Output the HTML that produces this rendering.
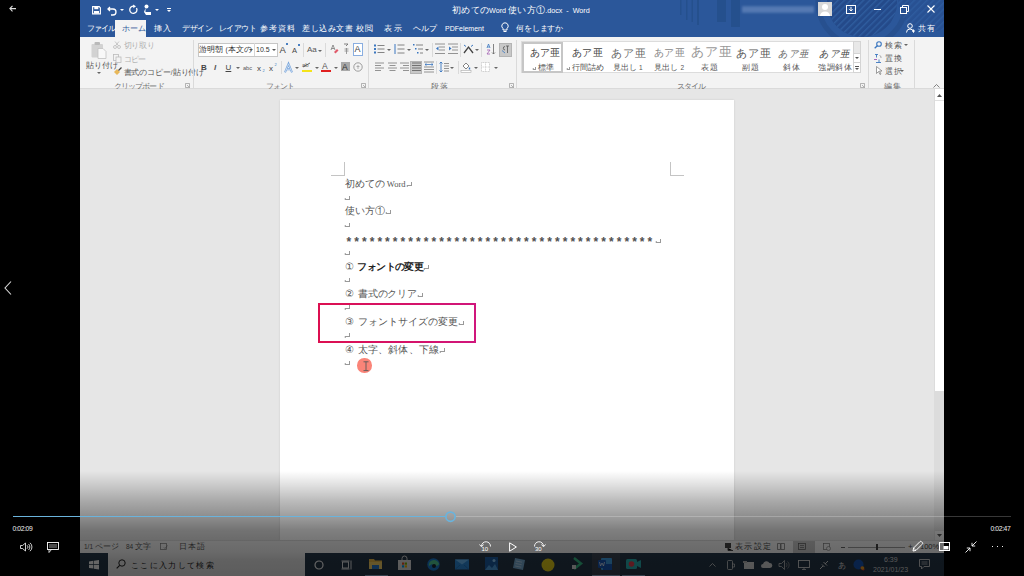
<!DOCTYPE html>
<html><head><meta charset="utf-8">
<style>
*{margin:0;padding:0;box-sizing:border-box}
html,body{width:1024px;height:576px;overflow:hidden;background:#000}
body{position:relative;font-family:"Liberation Sans",sans-serif;color:#444}
.a{position:absolute}
.t{position:absolute;white-space:nowrap;line-height:1}
.j{font-family:"Liberation Sans",sans-serif;font-style:normal;font-size:1.2em;letter-spacing:.03em}
.dd{position:absolute;width:0;height:0;border-left:2px solid transparent;border-right:2px solid transparent;border-top:2px solid #666}
.ddw{border-top-color:#fff}
svg{position:absolute;overflow:visible}
#title{left:80px;top:0;width:864px;height:37px;background:#2b579a;overflow:hidden}
#tabs{left:80px;top:20px;width:864px;height:17px;background:#2b579a}
#ribbon{left:80px;top:37px;width:864px;height:52px;background:#f3f3f3;border-bottom:1px solid #dadada}
#docbg{left:80px;top:89px;width:854px;height:451px;background:#e6e6e6}
#page{left:280px;top:100px;width:454px;height:440px;background:#fff;box-shadow:0 0 2px rgba(0,0,0,.12)}
#vscroll{left:934px;top:89px;width:10px;height:451px;background:#fff}
#status{left:80px;top:540px;width:864px;height:13px;background:#f3f3f3;border-top:1px solid #dcdcdc}
#taskbar{left:80px;top:553px;width:864px;height:23px;background:#26384a}
#overlay{left:0;top:466px;width:1024px;height:110px;background:linear-gradient(to bottom,rgba(0,0,0,0) 0%,rgba(0,0,0,0.00) 4.5%,rgba(0,0,0,0.12) 17.3%,rgba(0,0,0,0.26) 30.9%,rgba(0,0,0,0.39) 46.4%,rgba(0,0,0,0.50) 58.2%,rgba(0,0,0,0.54) 68.2%,rgba(0,0,0,0.57) 79.1%,rgba(0,0,0,0.60) 85.5%,rgba(0,0,0,0.62) 100.0%)}
.w{color:#fff}
.tb{font-size:6.8px;color:#fff}
.rb{font-size:6.5px;color:#555}
.dis{color:#b0b0b0}
.gl{font-size:6.5px;color:#707070}
.sb{font-size:6.5px;color:#555}
.sep{position:absolute;width:1px;background:#dadada}
.doc{font-family:"Liberation Serif",serif;font-size:8px;color:#555}
.rt{position:absolute;display:inline-block;width:5px;height:4px;border-right:.8px solid #999;border-bottom:.8px solid #999}
.rt::before{content:"";position:absolute;left:-1px;bottom:-1.6px;border-right:2px solid #999;border-top:1.2px solid transparent;border-bottom:1.2px solid transparent}
.doc .rt{position:relative;margin-left:1px;top:-.5px}
.ast{font-family:"Liberation Sans",sans-serif;letter-spacing:3.05px;font-size:12px;font-weight:bold;color:#505050}
#wrap{position:absolute;left:0;top:0;width:1024px;height:576px}
</style></head><body><div id="wrap">
<!-- ===== TITLE BAR ===== -->
<div id="title" class="a">
  <svg width="864" height="37" style="left:0;top:0" viewBox="0 0 864 37">
    <defs><clipPath id="c1"><circle cx="782" cy="2" r="35"/></clipPath><clipPath id="c2"><circle cx="850" cy="0" r="32"/></clipPath><pattern id="hp" width="4.5" height="4.5" patternUnits="userSpaceOnUse" patternTransform="rotate(45)"><rect width="4.5" height="4.5" fill="#24498a"/><rect width="1.4" height="4.5" fill="#3161a4"/></pattern></defs>
    <circle cx="782" cy="2" r="44" fill="none" stroke="#27508f" stroke-width="5"/>
    <circle cx="782" cy="2" r="35" fill="#244c89"/>
    <rect x="730" y="-40" width="120" height="80" fill="url(#hp)" clip-path="url(#c1)" opacity=".8"/>
    <rect x="815" y="-40" width="80" height="80" fill="url(#hp)" clip-path="url(#c2)" opacity=".45"/>
    <g fill="#25508d"><rect x="600" y="0" width="1.5" height="15"/><rect x="606" y="0" width="1.5" height="20"/><rect x="611.5" y="0" width="1.5" height="22"/><rect x="617" y="0" width="2" height="25"/><rect x="637" y="0" width="9" height="22"/><rect x="651" y="0" width="9" height="27"/></g>
  </svg>
</div>

<!-- QAT icons -->
<svg style="left:91.5px;top:5.5px" width="9" height="8.5" viewBox="0 0 9 8.5"><path d="M.6.6h6.6l1.2 1.2v6.1H.6z" fill="none" stroke="#fff" stroke-width="1.1"/><rect x="2.3" y="1" width="4" height="2.2" fill="#fff"/><rect x="2" y="5" width="5" height="2.6" fill="#fff"/></svg>
<svg style="left:107px;top:5px" width="11" height="10" viewBox="0 0 11 10"><path d="M3 2L1 4l2 2M1 4h5a3 3 0 0 1 0 6H4" fill="none" stroke="#fff" stroke-width="1.3"/></svg>
<div class="dd ddw" style="left:119.5px;top:9px"></div>
<svg style="left:128px;top:4px" width="10" height="11" viewBox="0 0 10 11"><path d="M6 2.2A3.6 3.6 0 1 0 8.5 4" fill="none" stroke="#fff" stroke-width="1.3"/><path d="M5 0.5l3 1.7-2.6 2z" fill="#fff"/></svg>
<svg style="left:143px;top:4px" width="9" height="11" viewBox="0 0 9 11"><circle cx="3.5" cy="2.5" r="2" fill="#fff"/><path d="M2.5 4v4h5.5v3H3L1 8" fill="#fff"/></svg>
<div class="dd ddw" style="left:155px;top:9px"></div>
<div class="a" style="left:166.5px;top:8px;width:4px;height:1px;background:#fff"></div><div class="dd ddw" style="left:166.5px;top:10px"></div>
<div class="t tb" style="left:452px;top:6px;font-size:7.2px"><span class="j">初めての</span>Word <span class="j">使い方①</span>.docx &nbsp;- &nbsp;Word</div>
<!-- blurred user -->
<div class="a" style="left:742px;top:6px;width:72px;height:7px;background:linear-gradient(to bottom,#5d80b8,#7191c4,#5d80b8);opacity:.65;filter:blur(1px)"></div>
<div class="a" style="left:818px;top:2px;width:14px;height:14px;background:#d8d8d8"></div>
<svg style="left:818px;top:2px" width="14" height="14" viewBox="0 0 14 14"><circle cx="7" cy="5" r="3" fill="#fff"/><path d="M2 14a5 4.5 0 0 1 10 0z" fill="#fff"/></svg>
<svg style="left:846px;top:5px" width="10" height="9" viewBox="0 0 10 9"><rect x=".5" y=".5" width="9" height="8" fill="none" stroke="#fff"/><path d="M5 2v4M3.3 4.2L5 6l1.7-1.8" fill="none" stroke="#fff"/></svg>
<div class="a" style="left:874px;top:9px;width:7px;height:1px;background:#fff"></div>
<svg style="left:900px;top:5px" width="9" height="9" viewBox="0 0 9 9"><rect x=".5" y="2.5" width="6" height="6" fill="none" stroke="#fff"/><path d="M2.5 2.5V.5h6v6h-2" fill="none" stroke="#fff"/></svg>
<svg style="left:927px;top:5px" width="8" height="8" viewBox="0 0 8 8"><path d="M.5.5l7 7M7.5.5l-7 7" stroke="#fff" stroke-width="1.1"/></svg>
<!-- tabs -->
<div class="a" style="left:115px;top:20px;width:31px;height:17px;background:#f3f3f3"></div>
<div class="t tb" style="left:87px;top:25px"><span class="j" style="letter-spacing:calc(.03em + -1.25px)">ファイル</span></div>
<div class="t" style="left:121.5px;top:25px;font-size:6.8px;color:#2b579a"><span class="j">ホーム</span></div>
<div class="t tb" style="left:154px;top:25px"><span class="j" style="letter-spacing:calc(.03em + 0.95px)">挿入</span></div>
<div class="t tb" style="left:182px;top:25px"><span class="j" style="letter-spacing:calc(.03em + -0.50px)">デザイン</span></div>
<div class="t tb" style="left:219px;top:25px"><span class="j" style="letter-spacing:calc(.03em + -0.84px)">レイアウト</span></div>
<div class="t tb" style="left:260px;top:25px"><span class="j" style="letter-spacing:calc(.03em + 0.75px)">参考資料</span></div>
<div class="t tb" style="left:302px;top:25px"><span class="j" style="letter-spacing:calc(.03em + 0.30px)">差し込み文書</span></div>
<div class="t tb" style="left:355.5px;top:25px"><span class="j" style="letter-spacing:calc(.03em + 1.40px)">校閲</span></div>
<div class="t tb" style="left:384px;top:25px"><span class="j" style="letter-spacing:calc(.03em + 1.50px)">表示</span></div>
<div class="t tb" style="left:413px;top:25px"><span class="j" style="letter-spacing:calc(.03em + -0.20px)">ヘルプ</span></div>
<div class="t tb" style="left:445px;top:24.5px;font-size:7px">PDFelement</div>
<svg style="left:501px;top:22px" width="8" height="11" viewBox="0 0 8 11"><path d="M4 .8a3.2 3.2 0 0 0-2 5.7V8h4V6.5A3.2 3.2 0 0 0 4 .8z" fill="none" stroke="#fff" stroke-width="1"/><path d="M2.5 9.5h3" stroke="#fff"/></svg>
<div class="t tb" style="left:516px;top:25px"><span class="j" style="letter-spacing:calc(.03em + -0.40px)">何をしますか</span></div>
<svg style="left:906px;top:23px" width="9" height="10" viewBox="0 0 9 10"><circle cx="4" cy="3" r="2.3" fill="none" stroke="#fff"/><path d="M.5 9.5a3.5 3.5 0 0 1 7 0M6 8h3M7.5 6.5v3" fill="none" stroke="#fff"/></svg>
<div class="t tb" style="left:918px;top:25px"><span class="j" style="letter-spacing:calc(.03em + 1.15px)">共有</span></div>

<!-- ===== RIBBON ===== -->
<div id="ribbon" class="a"></div>
<!-- clipboard group -->
<svg style="left:90px;top:40.5px" width="18" height="19" viewBox="0 0 18 19"><rect x="1.5" y="3" width="11.5" height="13.5" rx="1" fill="#d2d2d2"/><rect x="4.5" y="1" width="5.5" height="3" rx="1" fill="#b9b9b9"/><path d="M8 7.5h5l3 3v7H8z" fill="#f8f8f8" stroke="#c0c0c0" stroke-width=".8"/></svg>
<div class="t rb" style="left:86px;top:61.5px"><span class="j" style="letter-spacing:calc(.03em + -0.30px)">貼り付け</span></div>
<div class="dd" style="left:96.5px;top:72px"></div>
<svg style="left:113px;top:41px" width="8" height="8" viewBox="0 0 8 8"><circle cx="2" cy="6" r="1.5" fill="none" stroke="#bbb" stroke-width=".8"/><circle cx="6" cy="6" r="1.5" fill="none" stroke="#bbb" stroke-width=".8"/><path d="M2.5 4.7L6 .5M5.5 4.7L2 .5" stroke="#bbb" stroke-width=".8"/></svg>
<div class="t rb dis" style="left:123.5px;top:41.5px"><span class="j" style="letter-spacing:calc(.03em + -0.50px)">切り取り</span></div>
<svg style="left:113px;top:54px" width="9" height="9" viewBox="0 0 9 9"><rect x=".5" y=".5" width="5" height="6" fill="none" stroke="#bbb" stroke-width=".8"/><rect x="3" y="3" width="5" height="5.5" fill="#f3f3f3" stroke="#bbb" stroke-width=".8"/></svg>
<div class="t rb dis" style="left:123.5px;top:56px"><span class="j" style="letter-spacing:calc(.03em + -1.10px)">コピー</span></div>
<svg style="left:113px;top:67px" width="9" height="9" viewBox="0 0 9 9"><path d="M1 5l3-3 3 3-3 3z" fill="#e8b85a"/><path d="M5.5 3.5L8.5.5" stroke="#444" stroke-width="1.2"/></svg>
<div class="t rb" style="left:123.5px;top:68.5px"><span class="j" style="letter-spacing:calc(.03em - .35px)">書式のコピー</span>/<span class="j" style="letter-spacing:calc(.03em - .35px)">貼り付け</span></div>
<div class="t gl" style="left:114px;top:82.5px"><span class="j" style="letter-spacing:calc(.03em + -1.14px)">クリップボード</span></div>
<svg style="left:185px;top:83px" width="5" height="5" viewBox="0 0 5 5"><path d="M.5.5h4v4h-4z" fill="none" stroke="#888" stroke-width=".6"/><path d="M2 2l2.5 2.5" stroke="#888" stroke-width=".6"/></svg>
<div class="sep" style="left:193px;top:40px;height:48px"></div>

<!-- font group -->
<div class="a" style="left:197.5px;top:42.5px;width:80px;height:14px;background:#fff;border:1px solid #c6c6c6"></div>
<div class="a" style="left:254px;top:43px;width:1px;height:13px;background:#d6d6d6"></div>
<div class="t rb" style="left:199px;top:46px;color:#333"><span class="j">游明朝</span> (<span class="j">本文の</span></div>
<div class="dd" style="left:249px;top:49px;border-top-color:#555"></div>
<div class="t rb" style="left:256px;top:46px;font-size:7px;color:#333">10.5</div>
<div class="dd" style="left:272px;top:49px;border-top-color:#555"></div>
<div class="t" style="left:279.5px;top:45px;font-size:9.5px;color:#444">A</div>
<div class="a" style="left:285.5px;top:43px;width:2px;height:2px;background:#4a7fc1"></div>
<div class="t" style="left:292px;top:47px;font-size:7.5px;color:#444">A</div>
<div class="a" style="left:297.5px;top:44px;width:2px;height:1.5px;background:#4a7fc1"></div>
<div class="sep" style="left:303px;top:43px;height:14px"></div>
<div class="t" style="left:307px;top:46px;font-size:8px;color:#555">Aa</div>
<div class="dd" style="left:318px;top:50px"></div>
<div class="sep" style="left:325px;top:43px;height:14px"></div>
<svg style="left:330px;top:44px" width="9" height="10" viewBox="0 0 9 10"><path d="M1 6L3 1l2 5M1.7 4.5h2.6" fill="none" stroke="#777" stroke-width=".8"/><path d="M4 8l3-3 1.5 1.5-3 3z" fill="#e05a6a"/></svg>
<svg style="left:343px;top:43px" width="7" height="12" viewBox="0 0 7 12"><path d="M1 1h4l-2 2" fill="none" stroke="#666" stroke-width=".8"/><path d="M1.5 6h4M1.5 8h4M3.5 5v6" stroke="#888" stroke-width=".8"/></svg>
<div class="a" style="left:353px;top:43px;width:10px;height:13px;border:1px solid #8aaee0;background:#fff"></div>
<div class="t" style="left:354.5px;top:45px;font-size:9px;color:#444">A</div>
<!-- font row 2 -->
<div class="t" style="left:201px;top:64px;font-size:8px;font-weight:bold;color:#444">B</div>
<div class="t" style="left:214px;top:64px;font-size:8px;font-style:italic;font-weight:bold;color:#555">I</div>
<div class="t" style="left:225.5px;top:64px;font-size:8px;color:#444;text-decoration:underline">U</div>
<div class="dd" style="left:236px;top:67px"></div>
<div class="t" style="left:243px;top:66px;font-size:5.6px;color:#555">abc</div>
<div class="t" style="left:257px;top:64.5px;font-size:8px;color:#444">x</div>
<div class="t" style="left:262.5px;top:69px;font-size:4px;color:#4a7fc1">2</div>
<div class="t" style="left:269px;top:64.5px;font-size:8px;color:#444">x</div>
<div class="t" style="left:274.5px;top:63px;font-size:4px;color:#4a7fc1">2</div>
<div class="sep" style="left:280.5px;top:61px;height:13px"></div>
<svg style="left:283.5px;top:62.5px" width="9" height="10" viewBox="0 0 9 10"><path d="M1 9.3L4.5 .8 8 9.3M2.3 6.3h4.4" fill="none" stroke="#6f9fd8" stroke-width="1.9"/><path d="M1 9.3L4.5 .8 8 9.3M2.3 6.3h4.4" fill="none" stroke="#e4eefa" stroke-width=".7"/></svg>
<div class="dd" style="left:295px;top:67px"></div>
<div class="t" style="left:302px;top:61.5px;font-size:6px;color:#666">ab</div>
<svg style="left:302px;top:62px" width="9" height="6" viewBox="0 0 9 6"><path d="M1 5l7-4" stroke="#555" stroke-width=".9"/></svg>
<div class="a" style="left:301.5px;top:69.5px;width:10px;height:2.5px;background:#f4e31a"></div>
<div class="dd" style="left:314.5px;top:67px"></div>
<div class="t" style="left:322px;top:61.5px;font-size:8.5px;color:#555">A</div>
<div class="a" style="left:321px;top:69.5px;width:10px;height:2.5px;background:#e02020"></div>
<div class="dd" style="left:334px;top:67px"></div>
<div class="a" style="left:341px;top:62px;width:8.5px;height:9px;background:#a9a9a9"></div>
<div class="t" style="left:342px;top:62.5px;font-size:8.5px;color:#333">A</div>
<svg style="left:353px;top:62px" width="10" height="10" viewBox="0 0 10 10"><circle cx="5" cy="5" r="4.2" fill="none" stroke="#888" stroke-width=".8"/><path d="M3.5 4.5h3M5 3v4" stroke="#999" stroke-width=".7"/></svg>
<div class="t gl" style="left:266px;top:82.5px"><span class="j" style="letter-spacing:calc(.03em + -1.15px)">フォント</span></div>
<svg style="left:361px;top:83px" width="5" height="5" viewBox="0 0 5 5"><path d="M.5.5h4v4h-4z" fill="none" stroke="#888" stroke-width=".6"/><path d="M2 2l2.5 2.5" stroke="#888" stroke-width=".6"/></svg>
<div class="sep" style="left:368px;top:40px;height:48px"></div>

<!-- paragraph group -->
<svg style="left:374px;top:44px" width="11" height="10" viewBox="0 0 11 10"><g fill="#3b77c0"><rect x="0" y="0.5" width="2" height="2"/><rect x="0" y="4" width="2" height="2"/><rect x="0" y="7.5" width="2" height="2"/></g><g stroke="#777" stroke-width=".9"><path d="M3.5 1.5h7M3.5 5h7M3.5 8.5h7"/></g></svg>
<div class="dd" style="left:387px;top:48.5px"></div>
<svg style="left:394px;top:43px" width="11" height="12" viewBox="0 0 11 12"><path d="M1 1v10" stroke="#3b77c0" stroke-width="1"/><g stroke="#777" stroke-width=".9"><path d="M3.5 2h7M3.5 6h7M3.5 10h7"/></g></svg>
<div class="dd" style="left:406.5px;top:48.5px"></div>
<svg style="left:413px;top:43px" width="11" height="12" viewBox="0 0 11 12"><g fill="#3b77c0"><rect x="0" y="1" width="1.5" height="1.5"/><rect x="2" y="5" width="1.5" height="1.5"/><rect x="4" y="9" width="1.5" height="1.5"/></g><g stroke="#777" stroke-width=".9"><path d="M3 2h7M5 6h5M7 10h3"/></g></svg>
<div class="dd" style="left:424.5px;top:48.5px"></div>
<div class="sep" style="left:432px;top:43px;height:14px"></div>
<svg style="left:435px;top:43px" width="10" height="12" viewBox="0 0 10 12"><g stroke="#888" stroke-width=".9"><path d="M0 1h10M4 4h6M4 7h6M0 10.5h10"/></g><path d="M3.5 3.5L1 5.5l2.5 2z" fill="#3b77c0"/></svg>
<svg style="left:447.5px;top:43px" width="10" height="12" viewBox="0 0 10 12"><g stroke="#888" stroke-width=".9"><path d="M0 1h10M4 4h6M4 7h6M0 10.5h10"/></g><path d="M1 3.5L3.5 5.5 1 7.5z" fill="#3b77c0"/></svg>
<div class="sep" style="left:459.5px;top:43px;height:14px"></div>
<svg style="left:463px;top:44px" width="11" height="10" viewBox="0 0 11 10"><path d="M1 9l4.5-6L10 9" fill="none" stroke="#444" stroke-width="1.3"/><path d="M1 1l2 1.5M10 1L8 2.5" stroke="#3b77c0" stroke-width="1"/></svg>
<div class="dd" style="left:474.5px;top:48.5px"></div>
<div class="sep" style="left:481px;top:43px;height:14px"></div>
<svg style="left:486px;top:43px" width="10" height="12" viewBox="0 0 10 12"><path d="M1 5L2.5 1 4 5M1.5 4h2" fill="none" stroke="#3b77c0" stroke-width=".8"/><path d="M1 7h3L1 11h3" fill="none" stroke="#a05ab0" stroke-width=".8"/><path d="M7.5 1v10M6 9.5l1.5 1.5 1.5-1.5" fill="none" stroke="#666" stroke-width=".8"/></svg>
<div class="a" style="left:499px;top:43px;width:12.5px;height:13.5px;background:#c8c8c8;border:1px solid #b4b4b4"></div>
<svg style="left:501px;top:45px" width="9" height="9" viewBox="0 0 9 9"><path d="M5 1h3M6.5 1v7M4 1.5a1.7 1.7 0 0 0 0 3.4" fill="none" stroke="#555" stroke-width=".8"/><path d="M4 8L1 5.5" stroke="#3b77c0" stroke-width=".8"/></svg>
<!-- para row 2 -->
<svg style="left:375px;top:62px" width="9" height="10" viewBox="0 0 9 10"><g stroke="#888" stroke-width=".9"><path d="M0 1h9M0 3.5h6M0 6h9M0 8.5h6"/></g></svg>
<svg style="left:387.5px;top:62px" width="9" height="10" viewBox="0 0 9 10"><g stroke="#888" stroke-width=".9"><path d="M0 1h9M1.5 3.5h6M0 6h9M1.5 8.5h6"/></g></svg>
<svg style="left:399.5px;top:62px" width="9" height="10" viewBox="0 0 9 10"><g stroke="#888" stroke-width=".9"><path d="M0 1h9M3 3.5h6M0 6h9M3 8.5h6"/></g></svg>
<div class="a" style="left:409.5px;top:60.5px;width:12.5px;height:13px;background:#c8c8c8;border:1px solid #b4b4b4"></div>
<svg style="left:411.5px;top:62px" width="9" height="10" viewBox="0 0 9 10"><g stroke="#666" stroke-width=".9"><path d="M0 1h9M0 3.5h9M0 6h9M0 8.5h9"/></g></svg>
<svg style="left:424px;top:61px" width="10" height="12" viewBox="0 0 10 12"><g stroke="#888" stroke-width=".9"><path d="M0 1h10M0 11h10M0 6h10M0 8.5h10"/></g><path d="M1 3.5h8M1 3.5l1.5-1.2M1 3.5l1.5 1.2M9 3.5L7.5 2.3M9 3.5L7.5 4.7" stroke="#3b77c0" stroke-width=".8"/></svg>
<div class="sep" style="left:436px;top:61px;height:13px"></div>
<svg style="left:439px;top:61px" width="10" height="12" viewBox="0 0 10 12"><path d="M2 1v10M.5 2.5L2 1l1.5 1.5M.5 9.5L2 11l1.5-1.5" fill="none" stroke="#3b77c0" stroke-width=".9"/><g stroke="#888" stroke-width=".9"><path d="M5 2.5h5M5 5h5M5 7.5h5M5 10h5"/></g></svg>
<div class="dd" style="left:450px;top:67px"></div>
<div class="sep" style="left:458px;top:61px;height:13px"></div>
<svg style="left:461px;top:61px" width="11" height="12" viewBox="0 0 11 12"><path d="M2 5l3-3 3 3-3 3z" fill="#fff" stroke="#666" stroke-width=".8"/><path d="M8.5 6.5v2" stroke="#3b77c0" stroke-width="1.4"/><rect x="0" y="9.5" width="10" height="2" fill="#fff" stroke="#aaa" stroke-width=".6"/></svg>
<div class="dd" style="left:474px;top:67px"></div>
<svg style="left:481px;top:62px" width="9" height="10" viewBox="0 0 9 10"><rect x=".5" y=".5" width="8" height="9" fill="#fff" stroke="#bbb" stroke-width=".7" stroke-dasharray="1 .6"/><path d="M4.5 .5v9M.5 5h8" stroke="#bbb" stroke-width=".6" stroke-dasharray="1 .6"/></svg>
<div class="dd" style="left:493.5px;top:67px"></div>
<div class="t gl" style="left:430.5px;top:82.5px"><span class="j" style="letter-spacing:calc(.03em + 0.90px)">段落</span></div>
<svg style="left:509px;top:83px" width="5" height="5" viewBox="0 0 5 5"><path d="M.5.5h4v4h-4z" fill="none" stroke="#888" stroke-width=".6"/><path d="M2 2l2.5 2.5" stroke="#888" stroke-width=".6"/></svg>
<div class="sep" style="left:516px;top:40px;height:48px"></div>

<!-- styles group -->
<div class="a" style="left:521px;top:41px;width:340px;height:32px;background:#fff;border:1px solid #dcdcdc"></div>
<div class="a" style="left:521.5px;top:41.5px;width:41.5px;height:31.5px;border:2px solid #c6c6c6"></div>
<div class="t" style="left:530px;top:48px;font-size:8px;color:#444"><span class="j" style="letter-spacing:calc(.03em + -0.50px)">あア亜</span></div>
<div class="t" style="left:533px;top:64px;font-size:6.5px;color:#555"><i class="rt" style="position:relative;display:inline-block;width:3px;height:3px;margin-right:1.5px;top:-.5px"></i><span class="j">標準</span></div>
<div class="t" style="left:572px;top:48px;font-size:8px;color:#444"><span class="j">あア亜</span></div>
<div class="t" style="left:567px;top:64px;font-size:6.5px;color:#555"><i class="rt" style="position:relative;display:inline-block;width:3px;height:3px;margin-right:1.5px;top:-.5px"></i><span class="j">行間詰め</span></div>
<div class="t" style="left:611px;top:47.5px;font-size:9px;color:#666"><span class="j" style="letter-spacing:calc(.03em + 0.70px)">あア亜</span></div>
<div class="t" style="left:612.5px;top:64px;font-size:6.5px;color:#555"><span class="j">見出し</span> 1</div>
<div class="t" style="left:654px;top:48px;font-size:8px;color:#888"><span class="j">あア亜</span></div>
<div class="t" style="left:654px;top:64px;font-size:6.5px;color:#555"><span class="j">見出し</span> 2</div>
<div class="t" style="left:690.5px;top:45px;font-size:11.2px;color:#999"><span class="j" style="letter-spacing:calc(.03em + 0.80px)">あア亜</span></div>
<div class="t" style="left:701px;top:64px;font-size:6.5px;color:#555"><span class="j" style="letter-spacing:calc(.03em + 1.25px)">表題</span></div>
<div class="t" style="left:736px;top:47.5px;font-size:9px;color:#555"><span class="j" style="letter-spacing:calc(.03em + 0.70px)">あア亜</span></div>
<div class="t" style="left:742px;top:64px;font-size:6.5px;color:#555"><span class="j" style="letter-spacing:calc(.03em + 1.25px)">副題</span></div>
<div class="t" style="left:779px;top:48.5px;font-size:8px;color:#666;transform:skewX(-12deg)"><span class="j">あア亜</span></div>
<div class="t" style="left:783px;top:64px;font-size:6.5px;color:#555"><span class="j" style="letter-spacing:calc(.03em + 0.75px)">斜体</span></div>
<div class="t" style="left:820px;top:48.5px;font-size:8px;color:#444;transform:skewX(-12deg)"><span class="j">あア亜</span></div>
<div class="t" style="left:818px;top:64px;font-size:6.5px;color:#555"><span class="j" style="letter-spacing:calc(.03em + 0.50px)">強調斜体</span></div>
<div class="a" style="left:853px;top:41px;width:8px;height:32px;background:#fff;border:1px solid #d4d4d4"></div>
<div class="a" style="left:853px;top:41px;width:8px;height:12.5px;background:#e8e8e8;border:1px solid #d4d4d4"></div>
<div class="a" style="left:853px;top:62px;width:8px;height:1px;background:#d4d4d4"></div>
<div class="dd" style="left:855px;top:57px;border-top-color:#555"></div>
<div class="dd" style="left:855px;top:67.5px;border-top-color:#555"></div>
<div class="a" style="left:855px;top:65.5px;width:4px;height:.8px;background:#555"></div>
<div class="t gl" style="left:677px;top:82.5px"><span class="j" style="letter-spacing:calc(.03em + -1.20px)">スタイル</span></div>
<svg style="left:860px;top:83px" width="5" height="5" viewBox="0 0 5 5"><path d="M.5.5h4v4h-4z" fill="none" stroke="#888" stroke-width=".6"/><path d="M2 2l2.5 2.5" stroke="#888" stroke-width=".6"/></svg>
<div class="sep" style="left:867.5px;top:40px;height:48px"></div>

<!-- editing group -->
<svg style="left:874px;top:40.5px" width="8" height="8" viewBox="0 0 8 8"><circle cx="5" cy="3" r="2.3" fill="none" stroke="#3b77c0" stroke-width="1.1"/><path d="M3.3 4.7L.7 7.3" stroke="#3b77c0" stroke-width="1.3"/></svg>
<div class="t rb" style="left:884.5px;top:42px"><span class="j" style="letter-spacing:calc(.03em + 1.00px)">検索</span></div>
<div class="dd" style="left:903.5px;top:44px"></div>
<svg style="left:873px;top:53.5px" width="9" height="9" viewBox="0 0 9 9"><path d="M2 .5h3M3.5 .5v3" stroke="#3b77c0" stroke-width=".9"/><path d="M1 5.5h3" stroke="#a05ab0" stroke-width=".9"/><path d="M3 8.5h5M6 5.5v3" stroke="#3b77c0" stroke-width=".9"/><path d="M6.5 1.5a2 2 0 0 1 1.5 2.5" fill="none" stroke="#888" stroke-width=".7"/></svg>
<div class="t rb" style="left:884.5px;top:55px"><span class="j" style="letter-spacing:calc(.03em + 1.00px)">置換</span></div>
<svg style="left:876px;top:66px" width="6" height="9" viewBox="0 0 6 9"><path d="M.5.5v7l2-2 1.5 3 1-.5-1.5-3h2.5z" fill="#fff" stroke="#777" stroke-width=".7"/></svg>
<div class="t rb" style="left:885px;top:68px"><span class="j" style="letter-spacing:calc(.03em + 1.00px)">選択</span></div>
<div class="dd" style="left:900px;top:70px"></div>
<div class="t gl" style="left:883.5px;top:82.5px"><span class="j" style="letter-spacing:calc(.03em + 1.00px)">編集</span></div>
<div class="sep" style="left:913.5px;top:40px;height:48px"></div>
<svg style="left:933px;top:84px" width="7" height="4" viewBox="0 0 7 4"><path d="M.5 3.5l3-3 3 3" fill="none" stroke="#666" stroke-width=".8"/></svg>


<!-- ===== DOCUMENT ===== -->
<div id="docbg" class="a"></div>
<div id="page" class="a"></div>
<!-- corner marks -->
<div class="a" style="left:331px;top:175px;width:14px;height:1px;background:#c4c4c4"></div>
<div class="a" style="left:344px;top:162px;width:1px;height:14px;background:#c4c4c4"></div>
<div class="a" style="left:670px;top:175px;width:14px;height:1px;background:#c4c4c4"></div>
<div class="a" style="left:670px;top:162px;width:1px;height:14px;background:#c4c4c4"></div>
<!-- text lines -->
<div class="t doc" style="left:344.5px;top:178.5px"><span class="j" style="letter-spacing:calc(.03em + -0.20px)">初めての</span> <span style="font-size:8.5px">Word</span><i class="rt"></i></div>
<i class="rt" style="left:344.5px;top:195.5px"></i>
<div class="t doc" style="left:344.5px;top:206px"><span class="j" style="letter-spacing:calc(.03em + -0.20px)">使い方①</span><i class="rt"></i></div>
<i class="rt" style="left:344.5px;top:222.5px"></i>
<div class="t doc ast" style="left:346.5px;top:235.5px">****************************************<i class="rt" style="top:-3px"></i></div>
<i class="rt" style="left:344.5px;top:250.5px"></i>
<div class="t doc" style="left:344.5px;top:261.5px"><span class="j">①</span> <b class="j" style="color:#222;letter-spacing:-.6px;margin-left:1.6px">フォントの変更</b><i class="rt"></i></div>
<i class="rt" style="left:344.5px;top:277.5px"></i>
<div class="t doc" style="left:344.5px;top:289px"><span class="j">②</span> <span class="j" style="letter-spacing:calc(.03em + -0.45px);margin-left:2.2px">書式のクリア</span><i class="rt"></i></div>
<i class="rt" style="left:344.5px;top:305px"></i>
<div class="t doc" style="left:344.5px;top:317px"><span class="j">③</span> <span class="j" style="letter-spacing:calc(.03em + -0.30px);margin-left:2.5px">フォントサイズの変更</span><i class="rt"></i></div>
<i class="rt" style="left:344.5px;top:333px"></i>
<div class="t doc" style="left:344.5px;top:344.5px"><span class="j">④</span> <span class="j" style="letter-spacing:calc(.03em + -0.17px);margin-left:2.2px">太字、斜体、下線</span><i class="rt"></i></div>
<i class="rt" style="left:344.5px;top:360.5px"></i>
<!-- highlight box -->
<div class="a" style="left:318px;top:303.3px;width:158px;height:40px;border:2.9px solid #cc1166;border-image:linear-gradient(to right,#dc0f50,#d0167c) 1"></div>
<!-- cursor highlight -->
<div class="a" style="left:357px;top:358px;width:14.5px;height:14.5px;border-radius:50%;background:#fa8478"></div>
<svg style="left:362.5px;top:360.5px" width="6" height="10" viewBox="0 0 6 10"><path d="M.5 .8h5M.5 9.6h5M3 .8v8.8" stroke="#5a5a5a" stroke-width=".9"/></svg>

<div id="vscroll" class="a"></div>
<div class="a" style="left:934px;top:89px;width:1px;height:451px;background:#dcdcdc"></div>
<div class="a" style="left:935px;top:100px;width:9px;height:1px;background:#e0e0e0"></div>
<svg style="left:936.5px;top:93.5px" width="5" height="3" viewBox="0 0 5 3"><path d="M0 3l2.5-3L5 3z" fill="#555"/></svg>
<div class="a" style="left:935px;top:391px;width:9px;height:149px;background:#dcdcdc"></div>
<div class="a" style="left:935px;top:530px;width:9px;height:10px;background:#f0f0f0;border-top:1px solid #d8d8d8"></div>
<svg style="left:936.5px;top:533.5px" width="5" height="3" viewBox="0 0 5 3"><path d="M0 0l2.5 3L5 0z" fill="#555"/></svg>


<!-- ===== STATUS + TASKBAR ===== -->
<div id="status" class="a"></div>
<div class="t sb" style="left:84px;top:543px">1/1 <span class="j">ページ</span></div>
<div class="t sb" style="left:126px;top:543px">84 <span class="j">文字</span></div>
<svg style="left:160px;top:543px" width="8" height="7" viewBox="0 0 8 7"><rect x=".5" y=".5" width="6" height="6" fill="none" stroke="#777" stroke-width=".7"/><path d="M4 4.5l1 1 2.5-3" fill="none" stroke="#777" stroke-width=".7"/></svg>
<div class="t sb" style="left:179px;top:543px"><span class="j" style="letter-spacing:calc(.03em + 0.75px)">日本語</span></div>
<svg style="left:725px;top:543px" width="8" height="8" viewBox="0 0 8 8"><rect x="0" y="0" width="6" height="5" fill="#444"/><path d="M3 5v2.5h5" stroke="#444"/></svg>
<div class="t sb" style="left:735px;top:543px;color:#444"><span class="j" style="letter-spacing:calc(.03em + 1.10px)">表示設定</span></div>
<svg style="left:777px;top:543px" width="8" height="7" viewBox="0 0 8 7"><path d="M.5.5h3v6h-3zM4 .5h3.5v6H4z" fill="none" stroke="#666" stroke-width=".7"/></svg>
<div class="a" style="left:793px;top:541px;width:22px;height:12px;background:#c6c6c6"></div>
<svg style="left:797.5px;top:543px" width="8" height="7" viewBox="0 0 8 7"><rect x=".5" y=".5" width="7" height="6" fill="none" stroke="#555" stroke-width=".7"/><path d="M2 2.5h4M2 4.5h4" stroke="#555" stroke-width=".6"/></svg>
<svg style="left:823px;top:543px" width="8" height="8" viewBox="0 0 8 8"><rect x=".5" y=".5" width="6" height="6" fill="none" stroke="#777" stroke-width=".7"/><circle cx="5.5" cy="5.5" r="2" fill="#f3f3f3" stroke="#777" stroke-width=".6"/></svg>
<div class="a" style="left:841px;top:546.5px;width:4px;height:.8px;background:#666"></div>
<div class="a" style="left:848px;top:546.5px;width:57px;height:.8px;background:#999"></div>
<div class="a" style="left:875.5px;top:543.5px;width:2.5px;height:6px;background:#444"></div>
<div class="t sb" style="left:908px;top:543px;font-size:8px;color:#555">+</div>
<div class="t sb" style="left:920px;top:542.5px;font-size:7.5px;color:#444">100%</div>

<div id="taskbar" class="a"></div>
<svg style="left:89px;top:560px" width="10" height="9.5" viewBox="0 0 10 9.5"><g fill="#fff"><path d="M0 1.4L4.3.8v3.5H0z"/><path d="M4.9.7L10 0v4.3H4.9z"/><path d="M0 4.9h4.3v3.6L0 7.9z"/><path d="M4.9 4.9H10v4.6l-5.1-.8z"/></g></svg>
<div class="a" style="left:108px;top:553px;width:197px;height:23px;background:#f2f2f2"></div>
<svg style="left:116px;top:559px" width="10" height="10" viewBox="0 0 10 10"><circle cx="6" cy="4" r="3.2" fill="none" stroke="#222" stroke-width="1"/><path d="M3.7 6.3L.7 9.3" stroke="#222" stroke-width="1.2"/></svg>
<div class="t" style="left:131px;top:561px;font-size:7px;color:#222"><span class="j" style="letter-spacing:calc(.03em + 1.08px)">ここに入力して検索</span></div>
<svg style="left:314px;top:560px" width="10" height="10" viewBox="0 0 10 10"><circle cx="5" cy="5" r="4" fill="none" stroke="#fff" stroke-width="1.2"/></svg>
<svg style="left:341px;top:560px" width="11" height="10" viewBox="0 0 11 10"><rect x="1.5" y="2" width="6" height="6" fill="none" stroke="#fff" stroke-width=".9"/><path d="M.5 1h8M.5 9h8M10 .5v9" stroke="#fff" stroke-width=".9"/></svg>
<svg style="left:369px;top:558px" width="13" height="11" viewBox="0 0 13 11"><path d="M0 1h5l1 1.5h7V11H0z" fill="#f2c04a"/><rect x="0" y="4" width="13" height="7" fill="#ffd86a"/><rect x="3" y="7" width="7" height="4" fill="#2a7ad0"/></svg>
<div class="a" style="left:365px;top:574.5px;width:23px;height:1.5px;background:#8fb0d0"></div>
<svg style="left:398px;top:556px" width="13" height="14" viewBox="0 0 13 14"><path d="M4 4V2.5a2.5 2.5 0 0 1 5 0V4" fill="none" stroke="#ddd" stroke-width="1"/><rect x="0" y="4" width="13" height="10" fill="#e8e8e8"/><rect x="4" y="6.5" width="2.2" height="2.2" fill="#f25022"/><rect x="6.8" y="6.5" width="2.2" height="2.2" fill="#7fba00"/><rect x="4" y="9.3" width="2.2" height="2.2" fill="#00a4ef"/><rect x="6.8" y="9.3" width="2.2" height="2.2" fill="#ffb900"/></svg>
<svg style="left:427px;top:558px" width="13" height="13" viewBox="0 0 13 13"><circle cx="6.5" cy="6.5" r="6.2" fill="#1b7fd6"/><path d="M2 8a5 4.5 0 0 1 10-2.5c0 2-2 2.5-4 2.2A2.5 2.5 0 0 1 5 6" fill="#53d19a"/><circle cx="7" cy="8" r="2" fill="#1b2431"/></svg>
<svg style="left:455px;top:558px" width="14" height="12" viewBox="0 0 14 12"><rect x="0" y="1.5" width="14" height="10" fill="#2d8ee0"/><path d="M0 1.5l7 5 7-5" fill="#6cc0ff"/><path d="M0 11.5l5-4.5M14 11.5L9 7" stroke="#1a6ab0" stroke-width=".6"/></svg>
<svg style="left:485px;top:557px" width="13" height="13" viewBox="0 0 13 13"><rect x="0" y="0" width="13" height="13" fill="#1c5fa8"/><path d="M0 13l4-5 3 3 3-4 3 6z" fill="#4fa3e8"/><circle cx="9" cy="3.5" r="1.5" fill="#8fd0ff"/></svg>
<svg style="left:513px;top:557px" width="13" height="13" viewBox="0 0 13 13"><path d="M2 1l10 2-2 10L0 11z" fill="#7ab0d8"/><path d="M3 4l6 1.2M2.6 6.5l6 1.2M2.2 9l6 1.2" stroke="#ddeeff" stroke-width=".6"/></svg>
<svg style="left:541px;top:558px" width="14" height="14" viewBox="0 0 14 14"><circle cx="7" cy="7" r="6.5" fill="#e8d21a"/></svg>
<svg style="left:571px;top:557px" width="12" height="13" viewBox="0 0 12 13"><path d="M3 1l7 5.5-7 5.5" fill="none" stroke="#36c28a" stroke-width="2.5"/><rect x="1" y="8" width="4" height="4" fill="#e0e0e0"/></svg>
<div class="a" style="left:592px;top:553px;width:28px;height:23px;background:#3a4452"></div>
<svg style="left:598px;top:558px" width="14" height="12" viewBox="0 0 14 12"><rect x="3" y="0" width="11" height="12" rx="1" fill="#41a5ee"/><rect x="5" y="6" width="9" height="6" fill="#185abd"/><rect x="0" y="2" width="8" height="8" rx="1" fill="#185abd"/><path d="M1.5 4l1 4 1.5-3 1.5 3 1-4" fill="none" stroke="#fff" stroke-width=".7"/></svg>
<div class="a" style="left:592px;top:574.5px;width:28px;height:1.5px;background:#9ab8d8"></div>
<svg style="left:626px;top:558px" width="15" height="12" viewBox="0 0 15 12"><rect x="0" y="1" width="11" height="10" rx="1.5" fill="#2ab6b8"/><path d="M11 4l4-2v8l-4-2z" fill="#2ab6b8"/><circle cx="5.5" cy="6" r="2.8" fill="#e84050"/></svg>
<div class="a" style="left:622px;top:574.5px;width:23px;height:1.5px;background:#8fb0d0"></div>
<svg style="left:709px;top:563px" width="7" height="4" viewBox="0 0 7 4"><path d="M.5 3.5l3-3 3 3" fill="none" stroke="#ddd" stroke-width=".8"/></svg>
<svg style="left:727px;top:560px" width="8" height="10" viewBox="0 0 8 10"><rect x=".5" y=".5" width="5" height="9" rx="1" fill="none" stroke="#ddd" stroke-width=".8"/><path d="M5 4h2.5v3H5" fill="none" stroke="#ddd" stroke-width=".7"/></svg>
<svg style="left:743px;top:561px" width="11" height="8" viewBox="0 0 11 8"><rect x="1" y="1" width="10" height="7" fill="#ddd"/><rect x="0" y="0" width="4" height="2" fill="#bbb"/></svg>
<svg style="left:761px;top:561px" width="11" height="7" viewBox="0 0 11 7"><path d="M2 7a2 2 0 0 1 0-4 3.5 3.5 0 0 1 6.5-1A2.5 2.5 0 0 1 9 7z" fill="#ddd"/></svg>
<svg style="left:779px;top:560px" width="11" height="10" viewBox="0 0 11 10"><path d="M0 3.5h2.5L5.5 .5v9L2.5 6.5H0z" fill="none" stroke="#ccc" stroke-width=".8"/><path d="M7 3a2.5 2.5 0 0 1 0 4M8.5 1.5a4.5 4.5 0 0 1 0 7" fill="none" stroke="#999" stroke-width=".7"/></svg>
<svg style="left:798px;top:560px" width="12" height="10" viewBox="0 0 12 10"><rect x=".5" y=".5" width="11" height="7" fill="none" stroke="#ddd" stroke-width=".9"/><path d="M4 9.5h4M6 7.5v2" stroke="#ddd" stroke-width=".8"/></svg>
<svg style="left:819px;top:560px" width="10" height="10" viewBox="0 0 10 10"><path d="M1 9l3-3M6 4l3-3M3 4.5l2.5 2.5M4.5 2l3.5 3.5" fill="none" stroke="#ddd" stroke-width="1"/></svg>
<div class="t" style="left:838px;top:561px;font-size:7px;color:#e0e0e0"><span class="j">あ</span></div>
<svg style="left:853px;top:559px" width="12" height="12" viewBox="0 0 12 12"><circle cx="5.5" cy="5.5" r="5" fill="#1656b8"/><path d="M8 8l3 3" stroke="#e03a2a" stroke-width="2.4"/><circle cx="9.5" cy="9" r="1.8" fill="#f0a020"/></svg>
<div class="t" style="left:884px;top:555.5px;font-size:7px;color:#ddd">6:39</div>
<div class="t" style="left:873px;top:566px;font-size:7px;color:#ddd">2021/01/23</div>
<svg style="left:919px;top:559px" width="11" height="11" viewBox="0 0 11 11"><path d="M.5.5h10v7H5l-2.5 2.5V7.5h-2z" fill="none" stroke="#ddd" stroke-width=".9"/><path d="M2.5 3h6M2.5 5h6" stroke="#ddd" stroke-width=".7"/></svg>


<!-- ===== VIDEO OVERLAY ===== -->
<div id="overlay" class="a"></div>
<svg style="left:9px;top:4.5px" width="8" height="7" viewBox="0 0 8 7"><path d="M7 3.6H1.2M3.5 .9L.9 3.6 3.5 6.3" fill="none" stroke="#ddd" stroke-width="1.1"/></svg>
<svg style="left:4px;top:281px" width="8" height="14" viewBox="0 0 8 14"><path d="M7 .5L1 7l6 6.5" fill="none" stroke="#ddd" stroke-width="1.1"/></svg>
<div class="a" style="left:456px;top:516px;width:555px;height:1.2px;background:rgba(255,255,255,.22)"></div>
<div class="a" style="left:13px;top:515.9px;width:433px;height:1.6px;background:#6ab3dc"></div>
<svg style="left:440px;top:506px" width="21" height="21" viewBox="0 0 21 21"><circle cx="10.5" cy="10.7" r="4.6" fill="none" stroke="#6ab3dc" stroke-width="1.7"/></svg>
<div class="t" style="left:12.5px;top:525.5px;font-size:6.8px;letter-spacing:-.4px;color:#eee">0:02:09</div>
<div class="t" style="left:990.5px;top:525.5px;font-size:6.8px;letter-spacing:-.4px;color:#eee">0:02:47</div>
<svg style="left:20px;top:541.5px" width="12" height="10" viewBox="0 0 12 10"><path d="M.5 3.5h2L5.5 1v8L2.5 6.5h-2z" fill="none" stroke="#fff" stroke-width=".8"/><path d="M7 3.3a2 2 0 0 1 0 3.4M8.5 2a4 4 0 0 1 0 6M10 .8a5.5 5.5 0 0 1 0 8.4" fill="none" stroke="#fff" stroke-width=".8"/></svg>
<svg style="left:47px;top:541.5px" width="12" height="11" viewBox="0 0 12 11"><rect x=".5" y=".5" width="11" height="7" fill="none" stroke="#fff" stroke-width=".9"/><path d="M2 3h8M2 5h8" stroke="#fff" stroke-width=".6"/><path d="M2 7.5v3l2.5-3" fill="none" stroke="#fff" stroke-width=".8"/></svg>
<svg style="left:479px;top:540.5px" width="13" height="12" viewBox="0 0 13 12"><path d="M2.5 5a4.5 4.5 0 0 1 9 .5" fill="none" stroke="#fff" stroke-width=".9"/><path d="M.5 3.5L2.5 5.8 4.5 3.5" fill="none" stroke="#fff" stroke-width=".9"/></svg>
<div class="t" style="left:481.5px;top:545.5px;font-size:6px;color:#fff">10</div>
<svg style="left:508.5px;top:541.5px" width="8" height="10" viewBox="0 0 8 10"><path d="M.6.8v8.4L7.4 5z" fill="none" stroke="#fff" stroke-width="1"/></svg>
<svg style="left:532.5px;top:540.5px" width="13" height="12" viewBox="0 0 13 12"><path d="M10.5 5a4.5 4.5 0 0 0-9 .5" fill="none" stroke="#fff" stroke-width=".9"/><path d="M12.5 3.5L10.5 5.8 8.5 3.5" fill="none" stroke="#fff" stroke-width=".9"/></svg>
<div class="t" style="left:535px;top:545.5px;font-size:6px;color:#fff">30</div>
<svg style="left:912px;top:541px" width="11" height="11" viewBox="0 0 11 11"><path d="M1 10l.6-3L8 .6a1 1 0 0 1 1.4 0l1 1a1 1 0 0 1 0 1.4L4 9.4z" fill="none" stroke="#fff" stroke-width="1"/><path d="M1.6 7L4 9.4" stroke="#fff" stroke-width=".8"/></svg>
<svg style="left:939px;top:542px" width="11" height="9" viewBox="0 0 11 9"><rect x=".5" y=".5" width="10" height="8" fill="none" stroke="#fff" stroke-width="1"/><rect x="4.5" y="4" width="5" height="3.5" fill="#fff"/></svg>
<svg style="left:965px;top:540.5px" width="12" height="12" viewBox="0 0 12 12"><path d="M11.5.5L7 5M7 1.8V5h3.2M.5 11.5L5 7M1.8 7H5v3.2" fill="none" stroke="#fff" stroke-width=".9"/></svg>
<div class="a" style="left:992px;top:546.2px;width:1.3px;height:1.3px;background:#eee"></div>
<div class="a" style="left:997px;top:546.2px;width:1.3px;height:1.3px;background:#eee"></div>
<div class="a" style="left:1002px;top:546.2px;width:1.3px;height:1.3px;background:#eee"></div>

</div></body></html>
